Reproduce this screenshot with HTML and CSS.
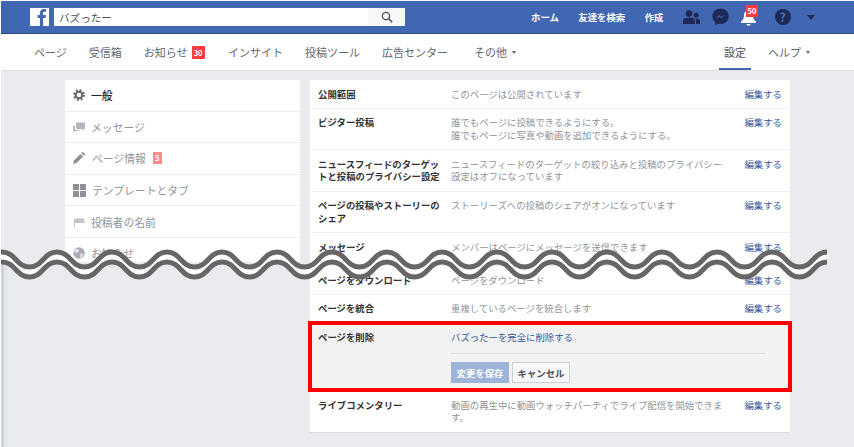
FILE: index.html
```html
<!DOCTYPE html>
<html lang="ja">
<head>
  <meta charset="UTF-8" />
  <title>バズったー - 設定</title>
  <link rel="stylesheet" href="styles.css">
</head>
<body>

  <header class="topbar">
    <div class="logo">
      <svg width="19" height="19" viewBox="0 0 19 19"><path fill="#4267b2" d="M10 19v-8H7.600V8H10V6c0-2.700 1.600-4 3.900-4 1 0 1.900.1 2.100.1v2.600h-1.500c-1.200 0-1.500.6-1.500 1.400V8h3l-.4 3H13v8z"/></svg>
    </div>
    <div class="search">
      <span class="search-text">バズったー</span>
      <span class="search-btn">
        <svg width="12" height="12" viewBox="0 0 12 12"><circle cx="5" cy="5" r="3.600" fill="none" stroke="#4b4f56" stroke-width="1.300"/><path d="M7.700 7.700l3.400 3.400" stroke="#4b4f56" stroke-width="1.600"/></svg>
      </span>
    </div>
    <nav class="top-links">
      <a>ホーム</a>
      <a>友達を検索</a>
      <a>作成</a>
    </nav>
    <div class="top-icons">
      <svg class="ic-friends" width="17" height="14" viewBox="0 0 17 14"><circle cx="6" cy="3.600" r="3.300" fill="#1c2a55"/><path fill="#1c2a55" d="M0 14v-3c0-2.500 2-3.600 6-3.600s6 1.100 6 3.600v3z"/><circle cx="13.200" cy="5.200" r="2.500" fill="#1c2a55"/><path fill="#1c2a55" d="M13 14v-3.500c0-.8-.3-1.500-.8-2 .4-.1.800-.1 1.200-.1 2.400 0 3.600.9 3.600 2.600v3z"/></svg>
      <svg class="ic-msg" width="17" height="18" viewBox="0 0 17 18"><path fill="#1c2a55" d="M8.500.5C3.900.5.300 3.900.300 8.200c0 2.400 1.100 4.500 2.900 5.900v3.400l3.100-1.700c.7.200 1.400.3 2.200.3 4.600 0 8.200-3.500 8.200-7.900S13.100.500 8.500.500z"/><path fill="#4267b2" d="M3.900 10.600l3.300-3.500 1.900 1.800 3.600-1.900-3.400 3.600-1.800-1.900z"/></svg>
      <span class="bell">
        <svg width="15" height="17" viewBox="0 0 15 17"><path fill="#fff" d="M7.500 1.500c-2.900 0-4.500 2.100-4.500 4.800 0 3.200-1 5-3 6.300v1.400h15v-1.400c-2-1.300-3-3.100-3-6.300 0-2.700-1.600-4.800-4.500-4.800z"/><path fill="#fff" d="M5.500 15h4c0 1-.9 1.700-2 1.700s-2-.7-2-1.700z"/></svg>
        <span class="bell-count">50</span>
      </span>
      <span class="help">?</span>
      <span class="caret-big"></span>
    </div>
  </header>

  <nav class="subnav">
    <a>ページ</a>
    <a>受信箱</a>
    <a class="has-count">お知らせ<span class="count">30</span></a>
    <a>インサイト</a>
    <a>投稿ツール</a>
    <a class="wide">広告センター</a>
    <a>その他<span class="caret"></span></a>
    <span class="subnav-right">
      <a class="active">設定</a>
      <a>ヘルプ<span class="caret"></span></a>
    </span>
  </nav>

  <main class="page">
    <aside class="sidebar">
      <div class="side-item current">
        <svg width="12" height="12" viewBox="0 0 12 12"><circle cx="6" cy="6" r="3.300" fill="none" stroke="#606770" stroke-width="2"/><circle cx="6" cy="6" r="5" fill="none" stroke="#606770" stroke-width="1.800" stroke-dasharray="2 1.930"/></svg>
        <span>一般</span>
      </div>
      <div class="side-item">
        <svg width="12" height="12" viewBox="0 0 12 12"><path fill="#b4b7bd" d="M3 1.500h9v6.500h-1.500v2l-2-2H3z"/><path fill="#b4b7bd" d="M0 4.500h2v4.500h4.500l-1 1H2.500L1 11.500V10H0z"/></svg>
        <span>メッセージ</span>
      </div>
      <div class="side-item">
        <svg width="12" height="12" viewBox="0 0 12 12"><path fill="#8d9096" d="M0 12l.9-3.500 6.600-6.600 2.600 2.600-6.600 6.600zM8.300 1.100L9.300.1c.2-.1.4-.1.6 0l2 2c.1.200.1.400 0 .6l-1 1z"/></svg>
        <span class="shift">ページ情報</span>
        <span class="side-count">5</span>
      </div>
      <div class="side-item">
        <svg width="13" height="13" viewBox="0 0 13 13"><path fill="#8d9096" d="M0 0h6v6H0zM7 0h6v6H7zM0 7h6v6H0zM7 7h6v6H7z"/></svg>
        <span>テンプレートとタブ</span>
      </div>
      <div class="side-item">
        <svg width="12" height="12" viewBox="0 0 12 12"><path fill="#c3c5ca" d="M1 2.500h11l-1.500 2 1.500 2.500H2v4.500H1z"/></svg>
        <span>投稿者の名前</span>
      </div>
      <div class="side-item">
        <svg width="12" height="12" viewBox="0 0 12 12"><circle cx="6" cy="6" r="5.700" fill="#a9acb2"/><path fill="#e4e5e8" d="M3 1.700l3 .8-.5 2.500-3 1L1 4zM7.500 6l3 1-2 3.500-1.500.6z"/></svg>
        <span>お知らせ</span>
      </div>
    </aside>

    <section class="settings">
      <div class="row">
        <div class="row-label">公開範囲</div>
        <div class="row-text">このページは公開されています</div>
        <a class="row-edit">編集する</a>
      </div>
      <div class="row">
        <div class="row-label">ビジター投稿</div>
        <div class="row-text">誰でもページに投稿できるようにする。<br>誰でもページに写真や動画を追加できるようにする。</div>
        <a class="row-edit">編集する</a>
      </div>
      <div class="row">
        <div class="row-label">ニュースフィードのターゲットと投稿のプライバシー設定</div>
        <div class="row-text">ニュースフィードのターゲットの絞り込みと投稿のプライバシー設定はオフになっています</div>
        <a class="row-edit">編集する</a>
      </div>
      <div class="row">
        <div class="row-label">ページの投稿やストーリーのシェア</div>
        <div class="row-text">ストーリーズへの投稿のシェアがオンになっています</div>
        <a class="row-edit">編集する</a>
      </div>
      <div class="row row-cut">
        <div class="row-label">メッセージ</div>
        <div class="row-text">メンバーはページにメッセージを送信できます</div>
        <a class="row-edit">編集する</a>
      </div>
      <div class="row">
        <div class="row-label">ページをダウンロード</div>
        <div class="row-text">ページをダウンロード</div>
        <a class="row-edit">編集する</a>
      </div>
      <div class="row row-plain">
        <div class="row-label">ページを統合</div>
        <div class="row-text">重複しているページを統合します</div>
        <a class="row-edit">編集する</a>
      </div>
      <div class="row row-open">
        <div class="row-label">ページを削除</div>
        <div class="row-body">
          <a class="delete-link">バズったーを完全に削除する</a>
          <div class="row-actions">
            <button class="btn-save">変更を保存</button>
            <button class="btn-cancel">キャンセル</button>
          </div>
        </div>
      </div>
      <div class="row row-last">
        <div class="row-label">ライブコメンタリー</div>
        <div class="row-text">動画の再生中に動画ウォッチパーティでライブ配信を開始できます。</div>
        <a class="row-edit">編集する</a>
      </div>
    </section>
  </main>

  <div class="edge-strip"></div>

  <!-- torn edge drawn over the page -->
  <svg class="tear" width="854" height="50" viewBox="0 0 854 50">
    <defs>
      <path id="wave" fill="none" d="M-53 12c13 0 14 15 27.500 15s14-15 27.500-15 14 15 27.500 15 14-15 27.500-15 14 15 27.500 15 14-15 27.500-15 14 15 27.500 15 14-15 27.500-15 14 15 27.500 15 14-15 27.500-15 14 15 27.500 15 14-15 27.500-15 14 15 27.500 15 14-15 27.500-15 14 15 27.500 15 14-15 27.500-15 14 15 27.500 15 14-15 27.500-15 14 15 27.500 15 14-15 27.500-15 14 15 27.500 15 14-15 27.500-15 14 15 27.500 15 14-15 27.500-15 14 15 27.500 15 14-15 27.500-15 14 15 27.500 15 14-15 27.500-15 14 15 27.500 15 14-15 27.500-15 14 15 27.500 15 14-15 27.500-15"/>
    </defs>
    <use href="#wave" y="5" stroke="#fff" stroke-width="9"/>
    <use href="#wave" stroke="#666" stroke-width="5"/>
    <use href="#wave" y="10" stroke="#666" stroke-width="5"/>
  </svg>

</body>
</html>
```

FILE: styles.css
```css
html, body {
  margin: 0;
  height: 447px;
  overflow: hidden;
}

body {
  position: relative;
  background: #e9ebee;
  font-family: "Noto Sans CJK JP", "Noto Sans", sans-serif;
  border-left: 1px solid #fff;
  box-sizing: border-box;
}

a {
  cursor: pointer;
}

/* top blue bar */
.topbar {
  display: flex;
  align-items: center;
  height: 32px;
  padding-left: 29px;
  background: #4267b2;
  border-top: 1px solid #fff;
  border-bottom: 1px solid #29487d;
}

.logo {
  display: flex;
  align-items: flex-end;
  justify-content: center;
  width: 19px;
  height: 18px;
  background: #fff;
  overflow: hidden;
}

.search {
  display: flex;
  align-items: center;
  justify-content: space-between;
  width: 351px;
  height: 18px;
  margin-left: 5px;
  background: #fff;
}

.search-text {
  padding-left: 5px;
  font-size: 10.600px;
  color: #4b4f56;
}

.search-btn {
  display: flex;
  align-items: center;
  justify-content: center;
  width: 37px;
  height: 18px;
  background: #f6f7f9;
}

.top-links {
  display: flex;
  gap: 19.500px;
  margin-left: 126px;
  font-size: 9.400px;
  font-weight: 700;
  color: #fff;
}

.top-icons {
  display: flex;
  align-items: center;
  margin-left: 19px;
}

.ic-msg {
  margin-left: 12px;
}

.bell {
  position: relative;
  display: flex;
  margin-left: 12px;
}

.bell-count {
  position: absolute;
  left: 5px;
  top: -4px;
  padding: 0 2px;
  height: 12px;
  background: #fa3e3e;
  color: #fff;
  font-size: 7.500px;
  font-weight: 700;
  line-height: 12px;
}

.help {
  width: 16px;
  height: 16px;
  margin-left: 19px;
  border-radius: 50%;
  background: #1c2a55;
  color: #4f74bd;
  font-size: 12px;
  font-weight: 700;
  line-height: 16px;
  text-align: center;
}

.caret-big {
  width: 0;
  height: 0;
  margin-left: 16px;
  border: 4.500px solid transparent;
  border-top: 5px solid #1c2a55;
  border-bottom: 0;
}

/* white tabs under the bar */
.subnav {
  display: flex;
  align-items: stretch;
  gap: 22px;
  height: 36px;
  padding-left: 33px;
  background: #fff;
  border-bottom: 1px solid #dddfe2;
  font-size: 11px;
  line-height: 35px;
  color: #606770;
}

.subnav a {
  display: flex;
  align-items: center;
}

.subnav .has-count {
  margin-right: 1.500px;
}

.subnav .wide {
  margin-right: 4px;
}

.count {
  width: 13px;
  height: 13px;
  margin-left: 4px;
  background: #fa3e3e;
  color: #fff;
  font-size: 7.500px;
  font-weight: 700;
  line-height: 13px;
  text-align: center;
}

.caret {
  width: 0;
  height: 0;
  margin-left: 5px;
  border: 2px solid transparent;
  border-top: 3px solid #606770;
  border-bottom: 0;
}

.subnav-right {
  display: flex;
  gap: 22px;
  margin-left: 186px;
}

.subnav .active {
  margin: 0 -5px;
  padding: 0 5px;
  color: #4b4f56;
  box-shadow: inset 0 -2px 0 #4267b2;
}

/* columns */
.page {
  display: flex;
  align-items: flex-start;
  gap: 10px;
  padding: 9px 0 0 64px;
}

.sidebar {
  width: 235px;
  height: 182px;
  overflow: hidden;
  background: #fff;
}

.side-item {
  display: flex;
  align-items: center;
  gap: 6px;
  height: 30.600px;
  padding-left: 8px;
  border-bottom: 1px solid #e9ebee;
  font-size: 10.800px;
  color: #90949c;
}

.side-item.current {
  color: #1d2129;
  font-weight: 500;
}

.side-item .shift {
  margin-left: 1px;
}

.side-count {
  width: 9px;
  height: 12px;
  margin-left: 1px;
  background: #fb8c8c;
  color: #fff;
  font-size: 7.500px;
  font-weight: 700;
  line-height: 12px;
  text-align: center;
}

.settings {
  width: 480px;
  background: #fff;
  font-size: 9.400px;
  line-height: 12.600px;
}

.row {
  display: flex;
  padding: 7.600px 8px;
  border-bottom: 1px solid #f0f1f3;
}

.row-label {
  flex: none;
  width: 125px;
  margin-right: 8px;
  font-weight: 700;
  color: #333;
}

.row-text {
  width: 278px;
  color: #90949c;
}

.row-edit {
  margin-left: auto;
  color: #365899;
  white-space: nowrap;
}

.row-cut {
  padding-bottom: 12px;
}

.row-plain {
  padding-bottom: 8.300px;
  border-bottom: 0;
}

.row-open {
  position: relative;
  height: 67px;
  box-sizing: border-box;
  background: #f2f2f2;
  border-bottom: 0;
  outline: 4.500px solid #f00;
  outline-offset: -2.250px;
}

.row-body {
  width: 314px;
}

.delete-link {
  color: #365899;
}

.row-actions {
  display: flex;
  gap: 3px;
  margin-top: 9.500px;
  padding-top: 8px;
  border-top: 1px solid #dddfe2;
}

.row-actions button {
  width: 58px;
  height: 21px;
  padding: 0;
  box-sizing: border-box;
  font-family: inherit;
  font-size: 9.400px;
  font-weight: 700;
}

.btn-save {
  background: #9cb4d8;
  border: 1px solid #9cb4d8;
  color: #fff;
}

.btn-cancel {
  background: #f6f7f9;
  border: 1px solid #ced0d4;
  color: #4b4f56;
}

.row-last {
  padding-top: 8.500px;
  padding-bottom: 8px;
  border-bottom: 1px solid #dddfe2;
}

/* faint strip left of the lower half of the capture */
.edge-strip {
  position: absolute;
  left: 0;
  top: 265px;
  bottom: 0;
  width: 7px;
  background: linear-gradient(to right, #cfd3dd 3px, #e4e7e9 3px);
}

.tear {
  position: absolute;
  left: -1px;
  top: 240px;
}
```
